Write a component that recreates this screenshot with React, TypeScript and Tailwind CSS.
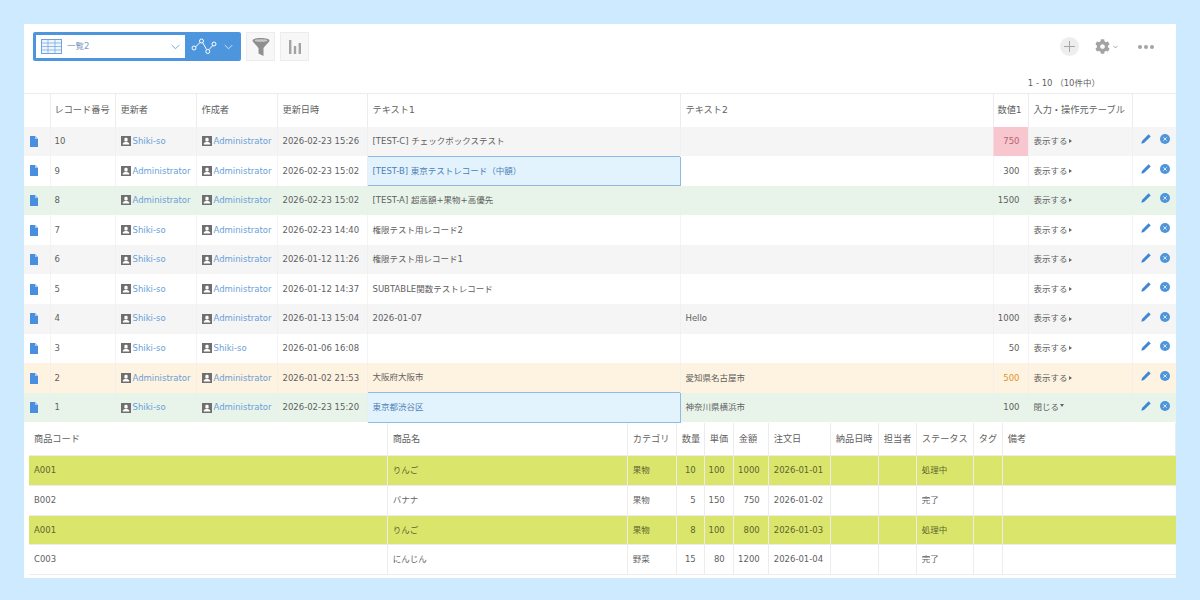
import { FaCog } from "react-icons/fa";

type Row = {
  no: string;
  updater: string;
  creator: string;
  date: string;
  text1: string;
  text2: string;
  num: string;
  toggle: string;
  rowBg: string;
  picked?: boolean;
  numClass?: string;
};

const rows: Row[] = [
  { no: "10", updater: "Shiki-so", creator: "Administrator", date: "2026-02-23 15:26", text1: "[TEST-C] チェックボックステスト", text2: "", num: "750", toggle: "表示する", rowBg: "bg-[#f5f5f5]", numClass: "bg-[#f8c6cf] text-[#b5636f]" },
  { no: "9", updater: "Administrator", creator: "Administrator", date: "2026-02-23 15:02", text1: "[TEST-B] 東京テストレコード（中額）", text2: "", num: "300", toggle: "表示する", rowBg: "bg-white", picked: true },
  { no: "8", updater: "Administrator", creator: "Administrator", date: "2026-02-23 15:02", text1: "[TEST-A] 超高額+果物+高優先", text2: "", num: "1500", toggle: "表示する", rowBg: "bg-[#e8f4ea]" },
  { no: "7", updater: "Shiki-so", creator: "Administrator", date: "2026-02-23 14:40", text1: "権限テスト用レコード2", text2: "", num: "", toggle: "表示する", rowBg: "bg-white" },
  { no: "6", updater: "Shiki-so", creator: "Administrator", date: "2026-01-12 11:26", text1: "権限テスト用レコード1", text2: "", num: "", toggle: "表示する", rowBg: "bg-[#f5f5f5]" },
  { no: "5", updater: "Shiki-so", creator: "Administrator", date: "2026-01-12 14:37", text1: "SUBTABLE関数テストレコード", text2: "", num: "", toggle: "表示する", rowBg: "bg-white" },
  { no: "4", updater: "Shiki-so", creator: "Administrator", date: "2026-01-13 15:04", text1: "2026-01-07", text2: "Hello", num: "1000", toggle: "表示する", rowBg: "bg-[#f5f5f5]" },
  { no: "3", updater: "Shiki-so", creator: "Shiki-so", date: "2026-01-06 16:08", text1: "", text2: "", num: "50", toggle: "表示する", rowBg: "bg-white" },
  { no: "2", updater: "Administrator", creator: "Administrator", date: "2026-01-02 21:53", text1: "大阪府大阪市", text2: "愛知県名古屋市", num: "500", toggle: "表示する", rowBg: "bg-[#fef2e0]", numClass: "text-[#e0952f]" },
  { no: "1", updater: "Shiki-so", creator: "Administrator", date: "2026-02-23 15:20", text1: "東京都渋谷区", text2: "神奈川県横浜市", num: "100", toggle: "閉じる", rowBg: "bg-[#e8f4ea]", picked: true },
];

const subRows = [
  { code: "A001", name: "りんご", cat: "果物", qty: "10", price: "100", amount: "1000", date: "2026-01-01", status: "処理中", lime: true },
  { code: "B002", name: "バナナ", cat: "果物", qty: "5", price: "150", amount: "750", date: "2026-01-02", status: "完了", lime: false },
  { code: "A001", name: "りんご", cat: "果物", qty: "8", price: "100", amount: "800", date: "2026-01-03", status: "処理中", lime: true },
  { code: "C003", name: "にんじん", cat: "野菜", qty: "15", price: "80", amount: "1200", date: "2026-01-04", status: "完了", lime: false },
];

const mainCols = [26, 65, 81, 81, 90, 313, 313, 35, 104, 44];
const subCols = [358, 240, 49, 28, 29, 35, 62, 48, 38, 57, 29, 173];

function TableIcon() {
  return (
    <svg width="21" height="15" viewBox="0 0 21 15" fill="none" stroke="#6ba5df" strokeWidth="1">
      <rect x="0.5" y="0.5" width="20" height="14" fill="#eef5fb" />
      <path d="M0.5 4h20M0.5 7.5h20M0.5 11h20M7 0.5v14M14 0.5v14" strokeWidth="0.7" />
    </svg>
  );
}

function GraphIcon() {
  return (
    <svg width="26" height="17" viewBox="0 0 26 17" fill="none" stroke="#fff" strokeWidth="1">
      <path d="M4.5 9 9.3 4.2M11.6 4.4 15.6 11.6M18 11.6 22 7.2" />
      <circle cx="3" cy="10" r="2" />
      <circle cx="10.5" cy="3" r="2" />
      <circle cx="16.8" cy="13.5" r="2" />
      <circle cx="23" cy="6" r="2" />
    </svg>
  );
}

function Chevron({ color }: { color: string }) {
  return (
    <svg width="9" height="6" viewBox="0 0 9 6" fill="none" stroke={color} strokeWidth="1">
      <path d="M0.7 1 4.5 4.8 8.3 1" />
    </svg>
  );
}

function FunnelIcon() {
  return (
    <svg width="18" height="18" viewBox="0 0 18 18">
      <path d="M0.5 2.5C0.5 1 4 0 9 0s8.500 1 8.500 2.500C17.500 4 15 5.500 11.500 10v8l-5-2.500V10C3 5.500 0.500 4 0.500 2.500Z" fill="#8f8f8f" />
      <ellipse cx="9" cy="2.500" rx="6.500" ry="1.300" fill="#c9c9c9" />
    </svg>
  );
}

function BarsIcon() {
  return (
    <svg width="12" height="14" viewBox="0 0 12 14" fill="#a3a3a3">
      <rect x="0" y="0" width="2.400" height="14" />
      <rect x="4.800" y="6" width="2.400" height="8" />
      <rect x="9.600" y="3" width="2.400" height="11" />
    </svg>
  );
}

function DocIcon() {
  return (
    <svg width="8" height="11" viewBox="0 0 8 11" className="block">
      <path d="M0 0h5l3 3v8H0Z" fill="#4a8fdf" />
      <path d="M5 0v3h3Z" fill="#a9cbf0" />
    </svg>
  );
}

function UserIcon() {
  return (
    <svg width="10" height="10" viewBox="0 0 10 10" className="shrink-0">
      <rect width="10" height="10" fill="#6f6f6f" />
      <rect x="3.400" y="1.800" width="3.200" height="3.600" rx="1.200" fill="#fff" />
      <path d="M1.800 8.500V7.300C2.500 6.300 3.800 6 5 6s2.500 0.300 3.200 1.300v1.200Z" fill="#fff" />
    </svg>
  );
}

function PencilIcon() {
  return (
    <svg width="10" height="10" viewBox="0 0 10 10" className="block">
      <path d="M7.600 0.300 9.700 2.400 3 9 0.300 9.700 1 7Z" fill="#3f87d6" />
    </svg>
  );
}

function CloseIcon() {
  return (
    <svg width="10" height="10" viewBox="0 0 10 10" className="block">
      <circle cx="5" cy="5" r="5" fill="#4d95dc" />
      <path d="M3.300 3.300 6.700 6.700M6.700 3.300 3.300 6.700" stroke="#dbe9f7" strokeWidth="1" />
    </svg>
  );
}

function UserLink({ name }: { name: string }) {
  return (
    <span className="flex items-center gap-[2px] whitespace-nowrap">
      <UserIcon />
      <span className="text-[#6a9fd8]">{name}</span>
    </span>
  );
}

function Toggle({ label }: { label: string }) {
  const open = label === "閉じる";
  return (
    <span className="flex items-center gap-px whitespace-nowrap">
      {label}
      {open ? (
        <svg width="4" height="4" viewBox="0 0 4 4" className="mb-[3px]"><path d="M0 0h4L2 3Z" fill="#666" /></svg>
      ) : (
        <svg width="4" height="4" viewBox="0 0 4 4"><path d="M0 0l3 2-3 2Z" fill="#666" /></svg>
      )}
    </span>
  );
}

export default function App() {
  return (
    <div className="h-[600px] w-[1200px] overflow-hidden bg-[#cdeafe] px-6 pt-6 text-[8.5px] text-[#5f5f5f] [font-family:'DejaVu_Sans','Noto_Sans_CJK_JP',sans-serif]">
      <div className="h-[554px] bg-white">
        <div className="flex items-start justify-between pl-[9px] pr-[22px] pt-2">
          <div className="flex gap-[5px]">
            <div className="flex h-[29px] w-[208px] rounded-[2px] bg-[#4d95dc] p-[3px] pr-0">
              <div className="flex w-[149px] items-center bg-white pl-[5px] pr-[5px]">
                <TableIcon />
                <span className="ml-[5px] flex-1 text-[#7a9cc4]">一覧2</span>
                <Chevron color="#7fa9d8" />
              </div>
              <div className="flex flex-1 items-center pl-[6px]">
                <GraphIcon />
                <span className="ml-[7px]"><Chevron color="#cfe2f6" /></span>
              </div>
            </div>
            <div className="flex h-[29px] w-[29px] items-center justify-center border border-[#ececec] bg-[#f7f7f7]">
              <FunnelIcon />
            </div>
            <div className="flex h-[29px] w-[29px] items-center justify-center border border-[#ececec] bg-[#f7f7f7]">
              <BarsIcon />
            </div>
          </div>
          <div className="flex items-center pt-[5px]">
            <div className="flex h-[19px] w-[19px] items-center justify-center rounded-full bg-[#eeeeee]">
              <svg width="11" height="11" viewBox="0 0 11 11" stroke="#a5a5a5" strokeWidth="1"><path d="M5.500 0v11M0 5.500h11" /></svg>
            </div>
            <FaCog className="ml-4 text-[#a3a3a3]" size={15} />
            <span className="ml-[3px] mr-px"><svg width="5" height="4" viewBox="0 0 5 4" fill="none" stroke="#999" strokeWidth="0.800"><path d="M0.500 0.800 2.500 3 4.500 0.800" /></svg></span>
            <div className="ml-[19px] flex gap-[2px]">
              <span className="h-[4px] w-[4px] rounded-full bg-[#a3a3a3]" />
              <span className="h-[4px] w-[4px] rounded-full bg-[#a3a3a3]" />
              <span className="h-[4px] w-[4px] rounded-full bg-[#a3a3a3]" />
            </div>
          </div>
        </div>

        <div className="flex h-[32px] items-end justify-end whitespace-pre pb-[3px] pr-[76px]">1 - 10 （10件中）</div>

        <table className="w-[1152px] table-fixed border-collapse">
          <colgroup>
            {mainCols.map((w, i) => (
              <col key={i} style={{ width: w }} />
            ))}
          </colgroup>
          <thead>
            <tr className="h-[33px] border-t border-[#ececec] text-left text-[9.2px]">
              <th className="border-r border-[#ececec]" />
              <th className="whitespace-nowrap border-r border-[#ececec] pl-[4px] font-normal">レコード番号</th>
              <th className="border-r border-[#ececec] pl-[5px] font-normal">更新者</th>
              <th className="border-r border-[#ececec] pl-[5px] font-normal">作成者</th>
              <th className="border-r border-[#ececec] pl-[5px] font-normal">更新日時</th>
              <th className="border-r border-[#ececec] pl-[5px] font-normal">テキスト1</th>
              <th className="border-r border-[#ececec] pl-[5px] font-normal">テキスト2</th>
              <th className="whitespace-nowrap border-r border-[#ececec] pl-[4px] font-normal">数値1</th>
              <th className="whitespace-nowrap border-r border-[#ececec] pl-[5px] font-normal">入力・操作元テーブル</th>
              <th />
            </tr>
          </thead>
          <tbody>
            {rows.map((r) => (
              <tr key={r.no} className={`h-[29.6px] ${r.rowBg}`}>
                <td className="border-r border-[#ececec]/60 pl-[6px]"><DocIcon /></td>
                <td className="border-r border-[#ececec]/60 pl-[4px]">{r.no}</td>
                <td className="border-r border-[#ececec]/60 pl-[5px]"><UserLink name={r.updater} /></td>
                <td className="border-r border-[#ececec]/60 pl-[5px]"><UserLink name={r.creator} /></td>
                <td className="whitespace-nowrap border-r border-[#ececec]/60 pl-[5px]">{r.date}</td>
                <td className={r.picked ? "border border-[#8fbbe3] bg-[#e2f3fd] pl-[5px] text-[#4f80b5]" : "border-r border-[#ececec]/60 pl-[5px]"}>{r.text1}</td>
                <td className="border-r border-[#ececec]/60 pl-[5px]">{r.text2}</td>
                <td className={`border-r border-[#ececec]/60 pr-[8px] text-right ${r.numClass ?? ""}`}>{r.num}</td>
                <td className="border-r border-[#ececec]/60 pl-[5px]"><Toggle label={r.toggle} /></td>
                <td>
                  <div className="flex items-center gap-[9px] pb-[4px] pl-[8px]">
                    <PencilIcon />
                    <CloseIcon />
                  </div>
                </td>
              </tr>
            ))}
          </tbody>
        </table>

        <div className="pl-[5px]">
          <table className="w-[1147px] table-fixed border-collapse border-b border-[#ececec]">
            <colgroup>
              {subCols.map((w, i) => (
                <col key={i} style={{ width: w }} />
              ))}
            </colgroup>
            <thead>
              <tr className="h-[33px] text-left text-[9.2px] [&>th]:border-r [&>th]:border-[#ececec] [&>th]:pl-[5px] [&>th]:font-normal [&>th]:whitespace-nowrap">
                <th>商品コード</th>
                <th>商品名</th>
                <th>カテゴリ</th>
                <th>数量</th>
                <th>単価</th>
                <th>金額</th>
                <th>注文日</th>
                <th>納品日時</th>
                <th>担当者</th>
                <th>ステータス</th>
                <th>タグ</th>
                <th>備考</th>
              </tr>
            </thead>
            <tbody>
              {subRows.map((r, i) => (
                <tr key={i} className={`h-[29.6px] border-t border-[#ececec] ${r.lime ? "bg-[#d9e66b] text-[#5f6430]" : "bg-white"}`}>
                  <td className="border-r border-[#ececec] pl-[5px]">{r.code}</td>
                  <td className="border-r border-[#ececec] pl-[5px]">{r.name}</td>
                  <td className="border-r border-[#ececec] pl-[5px]">{r.cat}</td>
                  <td className="border-r border-[#ececec] pr-[8px] text-right">{r.qty}</td>
                  <td className="border-r border-[#ececec] pr-[8px] text-right">{r.price}</td>
                  <td className="border-r border-[#ececec] pr-[8px] text-right">{r.amount}</td>
                  <td className="whitespace-nowrap border-r border-[#ececec] pl-[5px]">{r.date}</td>
                  <td className="border-r border-[#ececec]" />
                  <td className="border-r border-[#ececec]" />
                  <td className="border-r border-[#ececec] pl-[5px]">{r.status}</td>
                  <td className="border-r border-[#ececec]" />
                  <td />
                </tr>
              ))}
            </tbody>
          </table>
        </div>
      </div>
    </div>
  );
}
